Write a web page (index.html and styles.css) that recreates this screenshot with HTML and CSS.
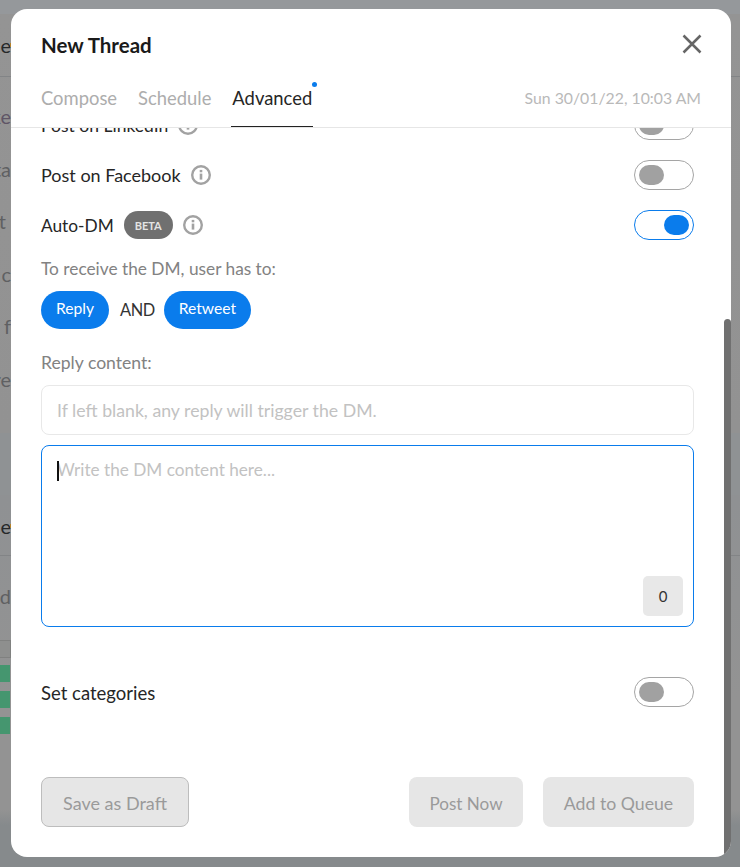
FILE: index.html
```html
<!DOCTYPE html>
<html lang="en">
<head>
<meta charset="utf-8">
<title>New Thread</title>
<link rel="stylesheet" href="styles.css">
</head>
<body>
<div class="backdrop" aria-hidden="true">
  <div class="bd-head"><span class="bd-text bd-dark">Queue</span></div>
  <div class="bd-list">
    <p class="bd-text bd-purple">Like</p>
    <p class="bd-text">Data</p>
    <p class="bd-text">Post&nbsp;</p>
    <p class="bd-text">Act c</p>
    <p class="bd-text">Act f</p>
    <p class="bd-text">Hire</p>
  </div>
  <div class="bd-band"></div>
  <div class="bd-head bd-head2"><span class="bd-text bd-dark">Queue</span></div>
  <div class="bd-sub"><span class="bd-text">Add</span></div>
  <div class="bd-box"></div>
  <div class="bd-bars">
    <div class="bd-bar"></div>
    <div class="bd-bar"></div>
    <div class="bd-bar"></div>
  </div>
</div>

<div class="modal">
  <header class="modal-head">
    <div class="title-row">
      <h1 class="title">New Thread</h1>
      <button class="close" aria-label="Close">
        <svg width="20" height="20" viewBox="0 0 20 20"><path d="M1.5 1.5 18.5 18.5M18.5 1.5 1.5 18.5" fill="none" stroke="#666" stroke-width="2.5"/></svg>
      </button>
    </div>
    <div class="tabs-row">
      <nav class="tabs">
        <span class="tab">Compose</span>
        <span class="tab">Schedule</span>
        <span class="tab tab-active">Advanced<i class="tab-dot"></i></span>
      </nav>
      <span class="date">Sun 30/01/22, 10:03 AM</span>
    </div>
  </header>

  <div class="body">
    <div class="row row-clipped">
      <div class="label label-li">Post on LinkedIn
        <svg class="info" viewBox="0 0 20 20"><circle cx="10" cy="10" r="8.8" fill="none" stroke="#a2a2a2" stroke-width="2.4"/><rect x="8.7" y="8.6" width="2.6" height="6" fill="#a2a2a2"/><rect x="8.7" y="4.9" width="2.6" height="2.4" fill="#a2a2a2"/></svg>
      </div>
      <span class="toggle"><i class="knob"></i></span>
    </div>
    <div class="row">
      <div class="label">Post on Facebook
        <svg class="info" viewBox="0 0 20 20"><circle cx="10" cy="10" r="8.8" fill="none" stroke="#a2a2a2" stroke-width="2.4"/><rect x="8.7" y="8.6" width="2.6" height="6" fill="#a2a2a2"/><rect x="8.7" y="4.9" width="2.6" height="2.4" fill="#a2a2a2"/></svg>
      </div>
      <span class="toggle"><i class="knob"></i></span>
    </div>
    <div class="row">
      <div class="label label-dm">Auto-DM
        <span class="beta">BETA</span>
        <svg class="info" viewBox="0 0 20 20"><circle cx="10" cy="10" r="8.8" fill="none" stroke="#a2a2a2" stroke-width="2.4"/><rect x="8.7" y="8.6" width="2.6" height="6" fill="#a2a2a2"/><rect x="8.7" y="4.9" width="2.6" height="2.4" fill="#a2a2a2"/></svg>
      </div>
      <span class="toggle toggle-on"><i class="knob"></i></span>
    </div>

    <p class="hint hint-receive">To receive the DM, user has to:</p>
    <div class="conditions">
      <span class="pill pill-reply">Reply</span>
      <span class="and">AND</span>
      <span class="pill pill-retweet">Retweet</span>
    </div>

    <p class="hint hint-reply">Reply content:</p>
    <div class="field">If left blank, any reply will trigger the DM.</div>
    <div class="editor">
      <div class="editor-text"><i class="caret"></i>Write the DM content here...</div>
      <span class="counter">0</span>
    </div>

    <div class="row row-cat">
      <div class="label label-cat">Set categories</div>
      <span class="toggle"><i class="knob"></i></span>
    </div>
  </div>

  <footer class="foot">
    <button class="btn btn-draft">Save as Draft</button>
    <div class="foot-right">
      <button class="btn btn-now">Post Now</button>
      <button class="btn btn-queue">Add to Queue</button>
    </div>
  </footer>

  <div class="scroll-thumb"></div>
</div>
</body>
</html>
```
FILE: styles.css
```css
* { box-sizing: border-box; }
html, body { margin: 0; height: 100%; overflow: hidden; }
body {
  width: 740px;
  height: 867px;
  background: #939597;
  font-family: Lato, "Open Sans", sans-serif;
  color: #1c1c1c;
}

/* dimmed page behind the dialog */
.backdrop {
  position: fixed;
  inset: 0;
  display: flex;
  flex-direction: column;
  background: linear-gradient(#95989b 0, #95989b 14px, #949494 14px, #929292 430px, #8f9193 500px, #939393 700px, #939393 810px, #868a8c 825px);
  font-size: 20px;
  overflow: hidden;
}
.bd-text {
  position: relative;
  display: flex;
  justify-content: flex-end;
  width: 11px;
  margin: 0;
  overflow: hidden;
  color: #5f6062;
  white-space: pre;
}
.bd-dark { color: #26282a; }
.bd-dark::after {
  content: "";
  position: absolute;
  right: 0;
  top: 10px;
  width: 1px;
  height: 4px;
  background: #b5822a;
}
.bd-purple { color: #5f5566; }
.bd-head {
  height: 77px;
  padding-top: 33px;
  border-bottom: 1px solid #828486;
  line-height: 24px;
}
.bd-list {
  height: 356px;
  padding-top: 27px;
  display: flex;
  flex-direction: column;
  gap: 28.6px;
  line-height: 24px;
}
.bd-band { height: 62px; background: #8f9294; }
.bd-head2 { height: 61px; padding-top: 19px; }
.bd-sub { height: 84px; padding-top: 28px; line-height: 24px; }
.bd-box { width: 11px; height: 18px; margin-bottom: 7px; background: #8e8f8e; border: 1px solid #808180; border-left: 0; }
.bd-bars { display: flex; flex-direction: column; gap: 9px; }
.bd-bar { width: 10px; height: 17px; background: #45966f; }

/* dialog */
.modal {
  position: fixed;
  left: 11px;
  top: 9px;
  width: 720px;
  height: 848px;
  background: #fff;
  border-radius: 16px;
  overflow: hidden;
  display: flex;
  flex-direction: column;
}
.modal-head {
  flex: none;
  height: 119px;
  padding: 0 30px;
  border-bottom: 1px solid #e6e6e6;
  display: flex;
  flex-direction: column;
}
.title-row {
  height: 70px;
  padding-top: 2px;
  display: flex;
  justify-content: space-between;
  align-items: center;
}
.title { margin: 0; font-size: 20.5px; font-weight: 700; color: #1a1a1a; }
.close { border: 0; padding: 0; margin-right: -1px; background: none; display: flex; margin-top: -2px; }
.tabs-row { flex: 1; display: flex; justify-content: space-between; align-items: stretch; }
.tabs { display: flex; gap: 21px; }
.tab { position: relative; display: block; padding-top: 8px; font-size: 18.4px; color: #adadad; line-height: 24px; height: 49px; }
.tab-active { margin: 0 -1px; padding-left: 1px; padding-right: 1px; color: #262626; border-bottom: 1px solid #222; }
.tab-dot { position: absolute; right: -4px; top: 4px; width: 5px; height: 5px; border-radius: 50%; background: #0a7cec; }
.date { padding-top: 8px; font-size: 15.8px; color: #b9b9b9; line-height: 24px; }

.body {
  flex: 1;
  min-height: 0;
  overflow: hidden;
  padding: 0 37px 0 30px;
}
.row {
  height: 30px;
  margin-bottom: 20px;
  display: flex;
  justify-content: space-between;
  align-items: center;
}
.row-clipped { margin-top: -18px; }
.row-cat { margin-top: 50px; margin-bottom: 0; }
.label { display: flex; align-items: center; gap: 10px; font-size: 18px; color: #262626; }
.label-li { font-size: 17.5px; }
.label-dm { font-size: 17.3px; }
.label-cat { font-size: 18.5px; padding-top: 1px; }
.info { width: 20px; height: 20px; flex: none; }
.beta {
  width: 49px;
  height: 28px;
  border-radius: 14px;
  background: #707070;
  color: #e4e4e4;
  font-size: 11px;
  font-weight: 700;
  display: flex;
  align-items: center;
  justify-content: center;
}
.toggle {
  width: 60px;
  height: 30px;
  padding: 4px;
  border: 1px solid #a5a5a5;
  border-radius: 15px;
  display: flex;
  background: #fff;
}
.knob { width: 25px; height: 20px; border-radius: 10px; background: #a1a1a1; }
.toggle-on { border-color: #0a7cec; justify-content: flex-end; }
.toggle-on .knob { background: #0a7cec; }

.hint { margin: 0; font-size: 17.3px; line-height: 22px; color: #828282; }
.hint-receive { margin-top: -2px; }
.conditions { margin-top: 11px; display: flex; align-items: center; gap: 11px; }
.pill {
  height: 38px;
  padding-bottom: 4px;
  border-radius: 19px;
  background: #0a7cec;
  color: #fff;
  font-size: 15.6px;
  display: flex;
  align-items: center;
  justify-content: center;
}
.pill-reply { width: 68px; }
.pill-retweet { width: 87px; margin-left: -2px; }
.and { padding-bottom: 2px; font-size: 16.4px; letter-spacing: -0.4px; color: #333; }
.hint-reply { margin-top: 23px; font-size: 17.6px; }
.field {
  margin-top: 11px;
  height: 50px;
  padding: 0 15px;
  border: 1px solid #e8e8e8;
  border-radius: 8px;
  display: flex;
  align-items: center;
  font-size: 17.7px;
  color: #c2c2c2;
}
.editor {
  position: relative;
  margin-top: 10px;
  height: 182px;
  padding: 13px 15px;
  border: 1px solid #0a7cec;
  border-radius: 8px;
}
.editor-text { position: relative; font-size: 17.2px; line-height: 22px; color: #c2c2c2; }
.caret { position: absolute; left: 0; top: 2px; width: 2px; height: 20px; background: #111; }
.counter {
  position: absolute;
  right: 10px;
  bottom: 10px;
  width: 40px;
  height: 40px;
  padding-bottom: 1px;
  border-radius: 5px;
  background: #e8e8e8;
  display: flex;
  align-items: center;
  justify-content: center;
  font-size: 15px;
  color: #333;
}

.foot {
  flex: none;
  height: 80px;
  padding: 0 37px 30px 30px;
  display: flex;
  justify-content: space-between;
}
.foot-right { display: flex; gap: 20px; }
.btn {
  height: 50px;
  border: 0;
  border-radius: 8px;
  padding: 2px 0 0;
  background: #e6e6e6;
  color: #9a9a9a;
  font: 18px Lato, "Open Sans", sans-serif;
}
.btn-draft { width: 148px; border: 1px solid #bdbdbd; }
.btn-now { width: 114px; font-size: 17.1px; }
.btn-queue { width: 151px; font-size: 17.7px; }

.scroll-thumb {
  position: absolute;
  right: 0;
  top: 310px;
  bottom: 0;
  width: 7px;
  border-radius: 4px 4px 0 0;
  background: #707070;
}
```
